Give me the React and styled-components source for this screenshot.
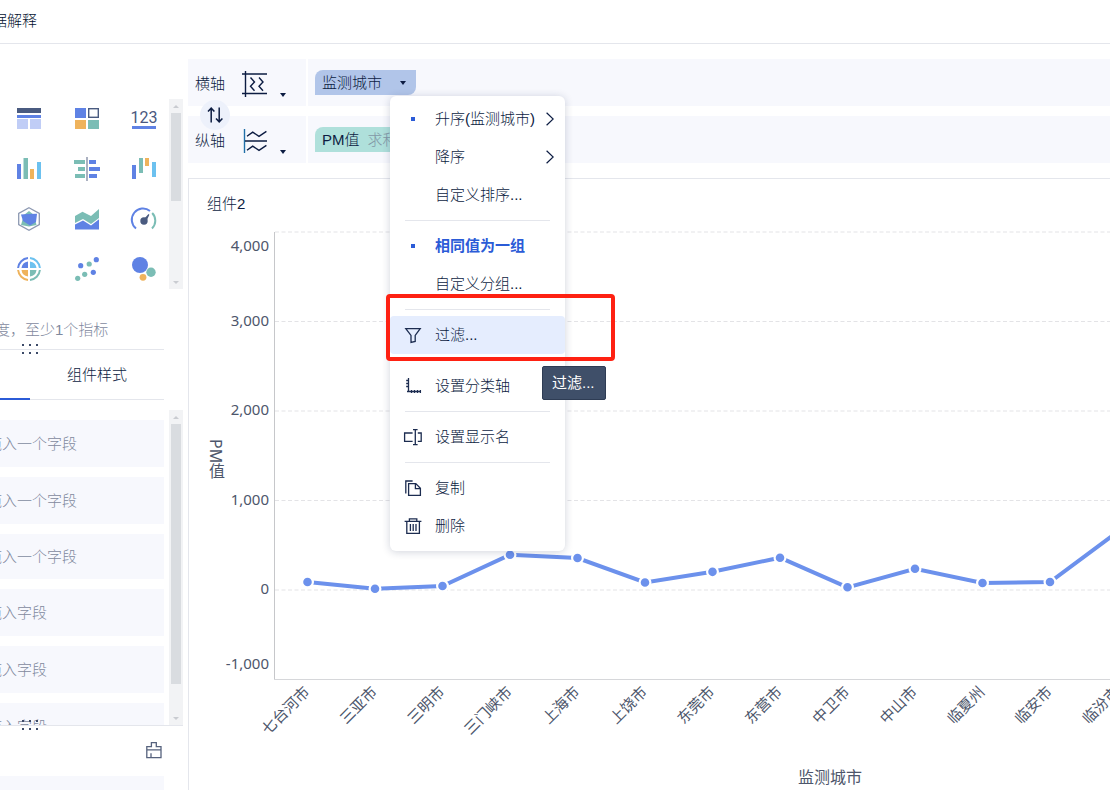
import React from "react";
import styled, { createGlobalStyle, css } from "styled-components";

const color = {
  text: "#0c1c42",
  muted: "#7f899e",
  accent: "#2b5bd7",
  line: "#e4e6ec",
  shelf: "#f7f8fd",
  track: "#f2f3f5",
  thumb: "#d9dce0",
  blue: "#5f82e4",
  teal: "#7bbdb5",
  yellow: "#efb35c",
  sky: "#6cc1ef",
  slate: "#4a5b80",
};

const GlobalStyle = createGlobalStyle`
  *, *::before, *::after { box-sizing: border-box; }
  body {
    margin: 0;
    background: #fff;
    color: ${color.text};
    font: 300 15px/24px "Liberation Sans", "Noto Sans CJK SC", sans-serif;
  }
  button {
    margin: 0;
    padding: 0;
    border: 0;
    background: none;
    color: inherit;
    font: inherit;
    cursor: pointer;
  }
  svg { display: block; flex: none; }
`;

const Page = styled.div`
  display: flex;
  flex-direction: column;
  height: 100vh;
  overflow: hidden;
`;

const Header = styled.header`
  flex: none;
  height: 44px;
  padding-top: 9px;
  border-bottom: 1px solid ${color.line};
`;

const HeaderTitle = styled.div`
  margin-left: -8px;
  color: #04112f;
`;

const Body = styled.div`
  display: flex;
  flex: 1;
  min-height: 0;
`;

const Sidebar = styled.aside`
  flex: none;
  width: 188px;
  padding-right: 5px;
  overflow: hidden;
`;

const ScrollArea = styled.div`
  display: flex;
  justify-content: space-between;
  height: ${(p) => p.$height}px;
  margin-top: ${(p) => p.$gap}px;
  overflow: hidden;
`;

const Track = styled.div`
  display: flex;
  flex-direction: column;
  justify-content: space-between;
  align-items: center;
  width: 14px;
  background: ${color.track};
`;

const TrackEnd = styled.span`
  display: flex;
  align-items: center;
  justify-content: center;
  width: 14px;
  height: 14px;
`;

const Thumb = styled.div`
  width: 10px;
  height: ${(p) => p.$length}px;
  margin-bottom: auto;
  background: ${color.thumb};
`;

const ChartTypes = styled.div`
  display: grid;
  grid-template-columns: 58px 58px 53px;
  grid-auto-rows: 24px;
  row-gap: 26px;
  width: 169px;
  padding-top: 8px;
`;

const ChartType = styled.button`
  display: flex;
  justify-content: flex-start;
  padding-left: ${(p) => (p.$last ? 16 : 17)}px;
`;

const Hint = styled.p`
  margin: 0 19px 0 0;
  padding: 29px 0 7px;
  color: ${color.muted};
  white-space: nowrap;
  text-indent: -5px;
`;

const Divider = styled.div`
  position: relative;
  height: 1px;
  margin-right: ${(p) => p.$inset || 0}px;
  background: ${color.line};
  z-index: 1;
`;

const Grip = styled.svg`
  position: absolute;
  left: 21px;
  top: -5px;
`;

const Tabs = styled.div`
  display: grid;
  grid-template-columns: 30px 134px;
  height: 50px;
  margin-right: 19px;
  border-bottom: 1px solid ${color.line};
`;

const Tab = styled.button`
  height: 50px;
  padding-top: 2px;
  border-bottom: 2px solid ${(p) => (p.$active ? color.accent : "transparent")};
`;

const Fields = styled.div`
  display: flex;
  flex-direction: column;
  gap: 10px;
  width: 164px;
  padding-top: 10px;
`;

const Field = styled.div`
  flex: none;
  padding: ${(p) => (p.$short ? 11 : 12)}px 0 ${(p) => (p.$short ? 10 : 11)}px;
  background: ${color.shelf};
  color: ${color.muted};
  text-indent: -13px;
`;

const FooterTools = styled.div`
  display: flex;
  align-items: center;
  justify-content: flex-end;
  height: 50px;
  padding: 0 21px 2px 0;
`;

const FooterBlock = styled.div`
  height: 47px;
  margin-right: 19px;
  background: ${color.shelf};
`;

const Main = styled.main`
  display: flex;
  flex: 1;
  flex-direction: column;
  min-width: 0;
  padding-top: 15px;
`;

const Shelves = styled.section`
  position: relative;
  display: grid;
  grid-template-columns: 118px 1fr;
  gap: 10px 2px;
  z-index: 2;
`;

const ShelfLabel = styled.div`
  display: flex;
  align-items: center;
  gap: 17px;
  height: 47px;
  padding: 2px 0 0 7px;
  background: ${color.shelf};
`;

const AxisButton = styled.button`
  display: flex;
  align-items: flex-end;
  gap: 12px;
`;

const ShelfFields = styled.div`
  display: flex;
  align-items: center;
  padding: 0 7px 1px;
  background: ${color.shelf};
`;

const PillHolder = styled.div`
  position: relative;
`;

const Pill = styled.button`
  display: flex;
  align-items: center;
  justify-content: space-between;
  width: 101px;
  height: 25px;
  padding: 2px 10px 0 7px;
  border-radius: 8px 0 8px 0;
  background: ${(p) => (p.$measure ? "#afe0db" : "#b1c5e9")};
  white-space: nowrap;
  overflow: hidden;
`;

const Aggregate = styled.span`
  flex: 1;
  padding-left: 8px;
  color: #8297a6;
  text-align: left;
`;

const Swap = styled.button`
  position: absolute;
  left: 12px;
  top: 41px;
  display: flex;
  align-items: center;
  justify-content: center;
  width: 30px;
  height: 30px;
  border-radius: 50%;
  background: #edf1fb;
`;

const Menu = styled.div`
  position: absolute;
  top: 26px;
  left: 75px;
  width: 175px;
  padding: 4px 0 6px;
  border-radius: 6px;
  background: #fff;
  box-shadow: 0 1px 8px rgba(20, 37, 74, 0.2);
`;

const MenuItem = styled.button`
  display: grid;
  grid-template-columns: 16px 1fr auto;
  column-gap: 14px;
  align-items: center;
  width: 100%;
  height: 38px;
  padding: 1px 11px 0 15px;
  text-align: left;
  white-space: nowrap;
  ${(p) =>
    p.$selected &&
    css`
      color: ${color.accent};
      font-weight: 700;
    `}
  ${(p) =>
    p.$hovered &&
    css`
      border-radius: 4px;
      background: #e5edfe;
    `}
`;

const MenuLabel = styled.span`
  width: 97px;
`;

const MenuRule = styled.hr`
  height: 1px;
  margin: 6px 15px;
  border: 0;
  background: ${color.line};
`;

const Bullet = styled.i`
  width: 4px;
  height: 4px;
  justify-self: center;
  background: ${color.accent};
`;

const HoverHolder = styled.div`
  position: relative;
`;

const Marker = styled.div`
  position: absolute;
  left: -4px;
  top: -22px;
  width: 229px;
  height: 67px;
  border: 4px solid #fe2112;
  border-radius: 4px;
  pointer-events: none;
`;

const Tooltip = styled.div`
  position: absolute;
  left: 152px;
  top: 50px;
  z-index: 1;
  width: 64px;
  height: 34px;
  padding: 4px 9px;
  border: 1px solid #2e3c54;
  border-radius: 2px;
  background: #3f4f69;
  color: #fff;
  font-weight: 400;
`;

const Card = styled.section`
  display: flex;
  flex: 1;
  flex-direction: column;
  min-height: 0;
  margin-top: 15px;
  border: 1px solid ${color.line};
  border-width: 1px 0 0 1px;
`;

const CardTitle = styled.h2`
  margin: 0;
  padding: 13px 18px;
  font: inherit;
`;

const Plot = styled.svg`
  width: 100%;
  flex: 1;
  min-height: 0;
  text {
    fill: #4d566b;
    font-family: "Noto Sans", "Noto Sans CJK SC", sans-serif;
    font-size: 15px;
    font-weight: 400;
  }
  text.axis-title {
    font-size: 16px;
  }
  text.vertical {
    writing-mode: vertical-rl;
  }
`;

const Caret = () => (
  <svg width="6" height="4" viewBox="0 0 6 4">
    <path d="M0 0h6L3 4z" fill={color.text} />
  </svg>
);

const Chevron = () => (
  <svg width="8" height="14" viewBox="0 0 8 14" fill="none" stroke={color.text} strokeWidth="1.2">
    <path d="M0.6 0.8 7.2 7 0.6 13.2" />
  </svg>
);

const TypeIcon = ({ children }) => (
  <svg width="24" height="24" viewBox="0 0 24 24" overflow="visible">
    {children}
  </svg>
);

const Bars = ({ items }) =>
  items.map(([fill, x, y, w, h]) => <rect key={`${x}-${y}`} fill={fill} x={x} y={y} width={w} height={h} />);

const Dots = ({ items }) =>
  items.map(([fill, x, y, r]) => <circle key={`${x}-${y}`} fill={fill} cx={x} cy={y} r={r} />);

const { blue, teal, yellow, sky, slate } = color;

const chartTypes = [
  ["分组表", <Bars items={[[slate, 0, 1, 24, 5], [blue, 0, 8, 24, 3], ["#c0cdf6", 0, 12, 11, 10], ["#c0cdf6", 13, 12, 11, 10]]} />],
  [
    "颜色表格",
    <>
      <Bars items={[[blue, 0, 1, 11, 10], [yellow, 0, 13, 11, 9], [teal, 13, 13, 11, 9]]} />
      <rect x="13.7" y="1.7" width="9.6" height="8.6" fill="none" stroke={slate} strokeWidth="1.4" />
    </>,
  ],
  [
    "指标卡",
    <>
      <text x="12" y="16" textAnchor="middle" fontFamily="Roboto, sans-serif" fontSize="16" fontWeight="400" fill="#4a587f">
        123
      </text>
      <rect x="0" y="19" width="24" height="3" fill={blue} />
    </>,
  ],
  ["柱形图", <Bars items={[[blue, 0, 7, 4, 15], [teal, 6.5, 1, 4.5, 21], [yellow, 13, 12, 4, 10], [sky, 20, 5, 4, 17]]} />],
  [
    "对比条形图",
    <Bars
      items={[
        [teal, -1, 3, 11, 4], [teal, 3, 10, 7, 4], [teal, 0, 17, 10, 4], ["#abb1c1", 11, 0, 2, 24],
        [blue, 14, 3, 7, 4], [blue, 14, 10, 11, 4], [blue, 14, 17, 8, 4],
      ]}
    />,
  ],
  ["瀑布图", <Bars items={[[blue, 0, 8, 4, 14], [teal, 7, 1, 4, 15], [yellow, 13, 1, 4, 8], [sky, 20, 5, 4, 15]]} />],
  [
    "雷达图",
    <>
      <path d="M12 .8 22.3 6.4V17.6L12 23.2 1.7 17.6V6.4z" fill="none" stroke="#8d99b2" strokeWidth="1.3" />
      <path d="M12 4 17 8 19.5 18 12 19.5 4 18 7 8z" fill={teal} />
      <path d="M4 7.5 11 7 20 6.7 19 15 13 18.5 6 14z" fill={blue} />
    </>,
  ],
  [
    "面积图",
    <>
      <path d="M0 9 7.5 4.7 16 9 24 2v9l-8 6-8-5-8 4z" fill={teal} />
      <path d="M0 17.5 8 13.5 16 18.5 24 12.2V22.5H0z" fill={blue} />
    </>,
  ],
  [
    "仪表盘",
    <>
      <path d="M4 21.5A11 11 0 0 1 18 4" fill="none" stroke={blue} strokeWidth="2" />
      <path d="M20.2 6A11 11 0 0 1 20 21.5" fill="none" stroke={teal} strokeWidth="2" />
      <path d="M11 13 16.5 7 17.4 7.8 14 15z" fill={slate} />
      <circle cx="12" cy="14" r="3.7" fill={slate} />
    </>,
  ],
  [
    "饼图",
    <>
      {[[blue, 180], [sky, 270], [teal, 0], [yellow, 90]].map(([c, angle]) => (
        <g key={angle} transform={`rotate(${angle} 12 12)`}>
          <path d="M13 13h6.5A7.5 7.5 0 0 1 13 19.5z" fill={c} />
          <path d="M22.9 13A11 11 0 0 1 13 22.9" fill="none" stroke={c} strokeWidth="2" />
        </g>
      ))}
    </>,
  ],
  [
    "散点图",
    <Dots items={[[blue, 21.3, 2.7, 2.6], [blue, 5.7, 8.7, 2.6], [teal, 14.2, 7, 2.6], [teal, 9.7, 17.3, 2.6], [blue, 18.3, 15.3, 2.6], [teal, 2.7, 21.3, 2.6]]} />,
  ],
  ["气泡图", <Dots items={[[blue, 8, 8, 8], [teal, 19, 15.3, 4.7], [yellow, 11, 20.3, 3.4]]} />],
];

const ArrowMark = ({ down }) => (
  <svg width="6" height="3" viewBox="0 0 6 3">
    <path d={down ? "M0 0h6L3 3z" : "M0 3h6L3 0z"} fill="#c9ccd1" />
  </svg>
);

const ScrollBar = ({ length }) => (
  <Track>
    <TrackEnd>
      <ArrowMark />
    </TrackEnd>
    <Thumb $length={length} />
    <TrackEnd>
      <ArrowMark down />
    </TrackEnd>
  </Track>
);

const ResizeGrip = () => (
  <Grip width="18" height="14" viewBox="0 0 18 14" fill="#3c4a68">
    {[1, 8, 15].map((x) => (
      <React.Fragment key={x}>
        <rect x={x} y="0" width="2" height="2" />
        <rect x={x} y="8" width="2" height="2" />
      </React.Fragment>
    ))}
  </Grip>
);

const AxisIcon = ({ vertical }) => (
  <svg width="26" height="26" viewBox="0 0 26 26" fill="none" stroke={color.text} strokeWidth="1.4">
    {vertical ? (
      <>
        <path d="M2.5 1v24" stroke="#1f6fa8" />
        <path d="M3 13h22M5 8.3l5.7-4.2L17 8.3l7.4-5M5 22.3l5.7-4.2 6.3 4.2 7.4-5" />
      </>
    ) : (
      <path d="M3.5 0v26M0 3h25M0 22.5h25M8.5 6.5l4 4.5-4 4.3 4 4.5M17 6.5l4 4.5-4 4.3 4 4.5" />
    )}
  </svg>
);

const MenuIcon = ({ d, tone = "#1c2c50" }) => (
  <svg width="16" height="16" viewBox="0 0 16 16" fill="none" stroke={tone} strokeWidth="1.3" overflow="visible">
    <path d={d} />
  </svg>
);

const icons = {
  filter: "M.8 1.6h14.4L10.2 8.4v6L6 15.4v-7z",
  axis: "M3.5 0v13.5M2 13.5h14M1.2 2.5h2.3M1.2 5.5h2.3M1.2 8.5h2.3M6.5 12v3M9.5 12v3M12.5 12v3M15.4 12v3",
  rename: "M7.6 4H-.4v8.4h8M12.8 4h3.4v8.4h-3.4M10.3.6v15M8 .6h4.6M8 15.6h4.6",
  copy: "M7.6 1H.8v12.6M3.6 3.6h7.2l4.6 4.6v7.2H3.6zM10.4 3.6v5h5",
  trash: "M-.4 3.4h16.8M4.4 3.4V.8h7.4v2.6M1.8 3.4v12h12.6v-12M5.4 6v7M8.2 6v7M11 6v7",
  brush: "M5.4.7h4.9v3.9H15v11H.8v-11h4.6zM.8 7.8H15M5 11.2v4.4",
};

const cities = [
  ["七台河市", 89], ["三亚市", 14], ["三明市", 45], ["三门峡市", 394], ["上海市", 357],
  ["上饶市", 84], ["东莞市", 203], ["东营市", 361], ["中卫市", 30], ["中山市", 238],
  ["临夏州", 78], ["临安市", 89], ["临汾市", 648],
];

const ticks = [
  ["4,000", 3, 22], ["3,000", 92.5, 97], ["2,000", 182, 186],
  ["1,000", 271.5, 276], ["0", 361, 365], ["-1,000", null, 440],
];

const pointX = (i) => 118.5 + i * 67.5;
const pointY = (value) => 361 - value * 0.0895;

const LineChart = () => (
  <Plot role="img" aria-label="各监测城市的PM值折线图">
    {ticks.map(([label, y, base]) => (
      <g key={label}>
        {y !== null && <line x1="86" x2="100%" y1={y} y2={y} stroke="#e3e3e6" strokeDasharray="4 2.5" />}
        <text x="80" y={base} textAnchor="end">
          {label}
        </text>
      </g>
    ))}
    <line x1="85.5" x2="85.5" y1="3" y2="451" stroke="#c6c7ca" />
    <line x1="85" x2="100%" y1="450.5" y2="450.5" stroke="#d6d7da" />
    <polyline
      points={cities.map(([, v], i) => `${pointX(i)},${pointY(v)}`).join(" ")}
      fill="none"
      stroke="#6c91ec"
      strokeWidth="4"
    />
    {cities.map(([name, v], i) => (
      <g key={name}>
        <circle cx={pointX(i)} cy={pointY(v)} r="5.4" fill="#6c91ec" stroke="#fff" strokeWidth="2.2" />
        <text textAnchor="end" transform={`translate(${pointX(i) + 3} 464) rotate(-45)`}>
          {name}
        </text>
      </g>
    ))}
    <text className="axis-title vertical" x="27" y="210">
      PM值
    </text>
    <text className="axis-title" x="641" y="554" textAnchor="middle">
      监测城市
    </text>
  </Plot>
);

const fields = ["拖入一个字段", "拖入一个字段", "拖入一个字段", "拖入字段", "拖入字段", "拖入字段"];

const FieldMenu = () => (
  <Menu role="menu">
    <MenuItem role="menuitem">
      <Bullet />
      <MenuLabel>升序(监测城市)</MenuLabel>
      <Chevron />
    </MenuItem>
    <MenuItem role="menuitem">
      <span />
      <MenuLabel>降序</MenuLabel>
      <Chevron />
    </MenuItem>
    <MenuItem role="menuitem">
      <span />
      自定义排序...
    </MenuItem>
    <MenuRule />
    <MenuItem role="menuitem" $selected>
      <Bullet />
      相同值为一组
    </MenuItem>
    <MenuItem role="menuitem">
      <span />
      自定义分组...
    </MenuItem>
    <MenuRule />
    <HoverHolder>
      <MenuItem role="menuitem" $hovered>
        <MenuIcon d={icons.filter} />
        过滤...
      </MenuItem>
      <Marker />
      <Tooltip role="tooltip">过滤...</Tooltip>
    </HoverHolder>
    <MenuRule />
    <MenuItem role="menuitem">
      <MenuIcon d={icons.axis} />
      设置分类轴
    </MenuItem>
    <MenuRule />
    <MenuItem role="menuitem">
      <MenuIcon d={icons.rename} />
      设置显示名
    </MenuItem>
    <MenuRule />
    <MenuItem role="menuitem">
      <MenuIcon d={icons.copy} />
      复制
    </MenuItem>
    <MenuItem role="menuitem">
      <MenuIcon d={icons.trash} />
      删除
    </MenuItem>
  </Menu>
);

export default function App() {
  return (
    <Page>
      <GlobalStyle />
      <Header>
        <HeaderTitle>据解释</HeaderTitle>
      </Header>
      <Body>
        <Sidebar>
          <ScrollArea $height={190} $gap={55}>
            <ChartTypes>
              {chartTypes.map(([name, art], i) => (
                <ChartType key={name} aria-label={name} $last={i % 3 === 2}>
                  <TypeIcon>{art}</TypeIcon>
                </ChartType>
              ))}
            </ChartTypes>
            <ScrollBar length={88} />
          </ScrollArea>
          <Hint>度，至少1个指标</Hint>
          <Divider $inset={19}>
            <ResizeGrip />
          </Divider>
          <Tabs role="tablist">
            <Tab role="tab" aria-selected="true" aria-label="图形属性" $active />
            <Tab role="tab" aria-selected="false">
              组件样式
            </Tab>
          </Tabs>
          <ScrollArea $height={315} $gap={10}>
            <Fields>
              {fields.map((label, i) => (
                <Field key={i} $short={i === 2}>
                  {label}
                </Field>
              ))}
            </Fields>
            <ScrollBar length={260} />
          </ScrollArea>
          <Divider>
            <ResizeGrip />
          </Divider>
          <FooterTools>
            <button aria-label="清空">
              <MenuIcon d={icons.brush} tone="#56627d" />
            </button>
          </FooterTools>
          <FooterBlock />
        </Sidebar>
        <Main>
          <Shelves>
            <ShelfLabel>
              横轴
              <AxisButton aria-label="横轴设置">
                <AxisIcon />
                <Caret />
              </AxisButton>
            </ShelfLabel>
            <ShelfFields>
              <PillHolder>
                <Pill>
                  监测城市
                  <Caret />
                </Pill>
                <FieldMenu />
              </PillHolder>
            </ShelfFields>
            <ShelfLabel>
              纵轴
              <AxisButton aria-label="纵轴设置">
                <AxisIcon vertical />
                <Caret />
              </AxisButton>
            </ShelfLabel>
            <ShelfFields>
              <Pill $measure>
                PM值
                <Aggregate>求和</Aggregate>
              </Pill>
            </ShelfFields>
            <Swap aria-label="交换横纵轴">
              <svg width="16" height="16" viewBox="0 0 16 16" fill="none" stroke={color.text} strokeWidth="1.5">
                <path d="M4.2 15.5V1.2M1 4.6l3.2-3.4 3.2 3.4M12.2.5v14.3M9 11.4l3.2 3.4 3.2-3.4" />
              </svg>
            </Swap>
          </Shelves>
          <Card>
            <CardTitle>组件2</CardTitle>
            <LineChart />
          </Card>
        </Main>
      </Body>
    </Page>
  );
}
